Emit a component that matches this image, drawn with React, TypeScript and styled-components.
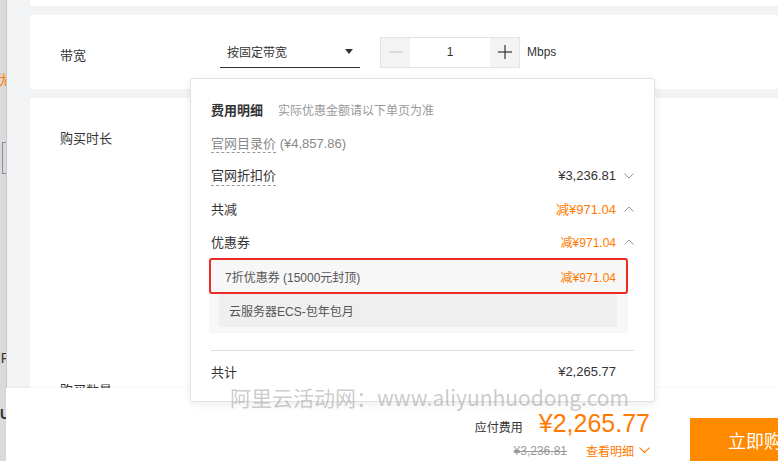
import React from 'react'
import styled, { createGlobalStyle } from 'styled-components'

const orange = '#ff7a00'
const font = '"Liberation Sans", "Noto Sans CJK SC", sans-serif'

const GlobalStyle = createGlobalStyle`
  html, body {
    margin: 0;
    padding: 0;
    overflow: hidden;
  }
  body {
    font-family: ${font};
    color: #333;
  }
`

type Row = {
  label: string
  value?: string
  accent?: boolean
  small?: boolean
  chevron?: 'up' | 'down'
  dashed?: boolean
}

const rows: Row[] = [
  { label: '官网折扣价', value: '¥3,236.81', chevron: 'down', dashed: true },
  { label: '共减', value: '减¥971.04', accent: true, chevron: 'up' },
  { label: '优惠券', value: '减¥971.04', accent: true, small: true, chevron: 'up' },
]

const Chevron: React.FC<{ dir: 'up' | 'down'; color?: string; size?: number }> = ({
  dir,
  color = '#999',
  size = 10,
}) => (
  <svg width={size} height={size * 0.6} viewBox="0 0 10 6">
    {dir === 'down' ? (
      <polyline points="0.5,0.5 5,5 9.5,0.5" fill="none" stroke={color} strokeWidth="1" />
    ) : (
      <polyline points="0.5,5.5 5,1 9.5,5.5" fill="none" stroke={color} strokeWidth="1" />
    )}
  </svg>
)

const App: React.FC = () => {
  return (
    <>
      <GlobalStyle />
      <Page>
        <SideStrip>
          <StripChar color={orange} top={72}>优</StripChar>
          <StripBox top={54} />
          <StripChar color="#1a4fd6" top={138} bold>,</StripChar>
          <StripChar color="#333" top={22}>P</StripChar>
          <StripChar color="#333" top={40} bold>U</StripChar>
        </SideStrip>

        <Main>
          <CardStub />
          <Card height={74}>
            <FieldLabel offset={8}>带宽</FieldLabel>
            <Select>
              <span>按固定带宽</span>
              <Caret />
            </Select>
            <Stepper>
              <StepButton disabled>
                <svg width="14" height="14" viewBox="0 0 14 14">
                  <line x1="0" y1="7" x2="14" y2="7" stroke="#ccc" strokeWidth="1.2" />
                </svg>
              </StepButton>
              <StepValue>1</StepValue>
              <StepButton>
                <svg width="14" height="14" viewBox="0 0 14 14">
                  <line x1="0" y1="7" x2="14" y2="7" stroke="#333" strokeWidth="1.2" />
                  <line x1="7" y1="0" x2="7" y2="14" stroke="#333" strokeWidth="1.2" />
                </svg>
              </StepButton>
            </Stepper>
            <Unit>Mbps</Unit>
          </Card>
          <TallCard>
            <FieldLabel offset={0}>购买时长</FieldLabel>
            <FieldLabel offset={0}>购买数量</FieldLabel>
          </TallCard>
        </Main>

        <Popover>
          <TitleRow>
            <Title>费用明细</Title>
            <Note>实际优惠金额请以下单页为准</Note>
          </TitleRow>
          <DetailRow>
            <ListPrice>
              <Dashed>官网目录价</Dashed> (¥4,857.86)
            </ListPrice>
          </DetailRow>
          {rows.map((r) => (
            <DetailRow key={r.label}>
              {r.dashed ? <Dashed dark>{r.label}</Dashed> : <span>{r.label}</span>}
              <Value accent={r.accent} small={r.small}>
                {r.value}
                {r.chevron && (
                  <ChevronWrap>
                    <Chevron dir={r.chevron} />
                  </ChevronWrap>
                )}
              </Value>
            </DetailRow>
          ))}
          <CouponGroup>
            <CouponHead>
              <span>7折优惠券 (15000元封顶)</span>
              <CouponValue>减¥971.04</CouponValue>
            </CouponHead>
            <CouponItem>云服务器ECS-包年包月</CouponItem>
          </CouponGroup>
          <Divider />
          <TotalRow>
            <span>共计</span>
            <TotalValue>¥2,265.77</TotalValue>
          </TotalRow>
        </Popover>

        <Watermark>阿里云活动网：www.aliyunhuodong.com</Watermark>

        <BottomBar>
          <PriceBlock>
            <PriceLine>
              <PayLabel>应付费用</PayLabel>
              <BigPrice>¥2,265.77</BigPrice>
            </PriceLine>
            <SubLine>
              <Struck>¥3,236.81</Struck>
              <DetailLink>
                查看明细
                <Chevron dir="down" color={orange} size={11} />
              </DetailLink>
            </SubLine>
          </PriceBlock>
          <BuyButton>立即购买</BuyButton>
        </BottomBar>
      </Page>
    </>
  )
}

const Page = styled.div`
  position: relative;
  display: flex;
  width: 778px;
  height: 461px;
  overflow: hidden;
  background: #f2f3f5;
`

const SideStrip = styled.div`
  position: relative;
  display: flex;
  flex-direction: column;
  align-items: flex-end;
  width: 6px;
  flex-shrink: 0;
  overflow: hidden;
  background: #dadada;
  border-right: 1px solid #c9c9c9;
`

const StripChar = styled.span<{ color: string; top: number; bold?: boolean }>`
  margin-top: ${(p) => p.top}px;
  margin-right: -4px;
  font-size: 14px;
  line-height: 16px;
  color: ${(p) => p.color};
  font-weight: ${(p) => (p.bold ? 700 : 400)};
`

const StripBox = styled.div<{ top: number }>`
  margin-top: ${(p) => p.top}px;
  width: 20px;
  height: 30px;
  margin-right: -18px;
  border: 1px solid #8a8a9a;
  flex-shrink: 0;
`

const Main = styled.div`
  flex: 1;
  display: flex;
  flex-direction: column;
  gap: 9px;
  padding-left: 23px;
`

const CardStub = styled.div`
  height: 6px;
  background: #fff;
`

const Card = styled.div<{ height: number }>`
  display: flex;
  align-items: center;
  height: ${(p) => p.height}px;
  padding: 0 0 0 30px;
  background: #fff;
`

const TallCard = styled.div`
  display: flex;
  flex-direction: column;
  gap: 236px;
  flex: 1;
  padding: 33px 0 0 30px;
  background: #fff;
`

const FieldLabel = styled.div<{ offset: number }>`
  width: 160px;
  margin-top: ${(p) => p.offset}px;
  font-size: 13px;
  line-height: 16px;
  color: #333;
`

const Select = styled.div`
  display: flex;
  align-items: center;
  justify-content: space-between;
  box-sizing: border-box;
  width: 140px;
  height: 31px;
  padding: 0 7px 0 7px;
  border-bottom: 1px solid #333;
  font-size: 12px;
  color: #333;
`

const Caret = styled.span`
  width: 0;
  height: 0;
  border-left: 4px solid transparent;
  border-right: 4px solid transparent;
  border-top: 5px solid #333;
`

const Stepper = styled.div`
  display: flex;
  box-sizing: border-box;
  width: 140px;
  height: 31px;
  margin-left: 20px;
  border: 1px solid #e3e3e3;
`

const StepButton = styled.div<{ disabled?: boolean }>`
  display: flex;
  align-items: center;
  justify-content: center;
  width: 29px;
  background: #f3f3f3;
`

const StepValue = styled.div`
  flex: 1;
  display: flex;
  align-items: center;
  justify-content: center;
  font-size: 12px;
  color: #333;
`

const Unit = styled.span`
  margin-left: 7px;
  margin-top: -1px;
  font-size: 12px;
  color: #333;
`

const Popover = styled.div`
  position: absolute;
  left: 190px;
  top: 78px;
  box-sizing: border-box;
  width: 465px;
  height: 324px;
  padding: 14px 20px 0 20px;
  background: #fff;
  border: 1px solid #e2e2e2;
  border-radius: 3px;
  box-shadow: 0 2px 8px rgba(0, 0, 0, 0.08);
  z-index: 3;
`

const TitleRow = styled.div`
  display: flex;
  align-items: center;
  height: 33px;
`

const Title = styled.span`
  font-size: 13px;
  font-weight: 700;
  color: #333;
`

const Note = styled.span`
  margin-left: 15px;
  font-size: 12px;
  color: #999;
`

const DetailRow = styled.div`
  display: flex;
  align-items: center;
  justify-content: space-between;
  height: 33px;
  font-size: 13px;
  color: #333;
`

const ListPrice = styled.span`
  color: #888;
`

const Dashed = styled.span<{ dark?: boolean }>`
  padding-bottom: 1px;
  border-bottom: 1px dashed #999;
  color: ${(p) => (p.dark ? '#333' : '#888')};
`

const Value = styled.span<{ accent?: boolean; small?: boolean }>`
  display: flex;
  align-items: center;
  font-size: ${(p) => (p.small ? 12 : 13)}px;
  color: ${(p) => (p.accent ? orange : '#333')};
`

const ChevronWrap = styled.span`
  display: flex;
  margin-left: 8px;
`

const CouponGroup = styled.div`
  display: flex;
  flex-direction: column;
  margin: 0 6px 0 -2px;
  padding-bottom: 6px;
  background: #f7f7f7;
`

const CouponHead = styled.div`
  display: flex;
  align-items: center;
  justify-content: space-between;
  height: 32px;
  padding: 0 10px 0 14px;
  border: 2px solid #ee2a24;
  border-radius: 3px;
  font-size: 12px;
  color: #555;
`

const CouponValue = styled.span`
  font-size: 12px;
  color: ${orange};
`

const CouponItem = styled.div`
  display: flex;
  align-items: center;
  height: 33px;
  margin: 0 11px 0 10px;
  padding-left: 10px;
  background: #efefef;
  font-size: 12px;
  color: #555;
`

const Divider = styled.div`
  height: 1px;
  margin-top: 17px;
  background: #ddd;
`

const TotalRow = styled.div`
  display: flex;
  align-items: center;
  justify-content: space-between;
  height: 40px;
  padding-right: 18px;
  font-size: 13px;
  color: #333;
`

const TotalValue = styled.span`
  color: #333;
`

const Watermark = styled.div`
  position: absolute;
  left: 230px;
  top: 383px;
  font-family: "Noto Sans CJK SC", "Liberation Sans", sans-serif;
  font-size: 21px;
  line-height: 28px;
  letter-spacing: 0;
  color: rgba(140, 140, 140, 0.45);
  white-space: nowrap;
  z-index: 5;
  pointer-events: none;
`

const BottomBar = styled.div`
  position: absolute;
  left: 6px;
  right: 0;
  bottom: 0;
  height: 73px;
  display: flex;
  align-items: flex-end;
  justify-content: flex-end;
  background: #fff;
  box-shadow: 0 -1px 3px rgba(0, 0, 0, 0.03);
  z-index: 2;
`

const PriceBlock = styled.div`
  display: flex;
  flex-direction: column;
  align-items: flex-end;
  padding-bottom: 2px;
`

const PriceLine = styled.div`
  display: flex;
  align-items: baseline;
`

const PayLabel = styled.span`
  font-size: 12px;
  color: #333;
`

const BigPrice = styled.span`
  margin-left: 16px;
  font-size: 25px;
  line-height: 34px;
  color: ${orange};
`

const SubLine = styled.div`
  display: flex;
  align-items: center;
  margin-top: 2px;
`

const Struck = styled.span`
  font-size: 12px;
  color: #999;
  text-decoration: line-through;
`

const DetailLink = styled.span`
  display: flex;
  align-items: center;
  gap: 5px;
  margin-left: 19px;
  font-size: 12px;
  color: ${orange};
`

const BuyButton = styled.div`
  display: flex;
  align-items: center;
  box-sizing: border-box;
  flex-shrink: 0;
  width: 130px;
  height: 43px;
  margin-left: 40px;
  margin-right: -42px;
  padding-left: 38px;
  background: #ff8a00;
  font-size: 18px;
  color: #fff;
`

export default App
